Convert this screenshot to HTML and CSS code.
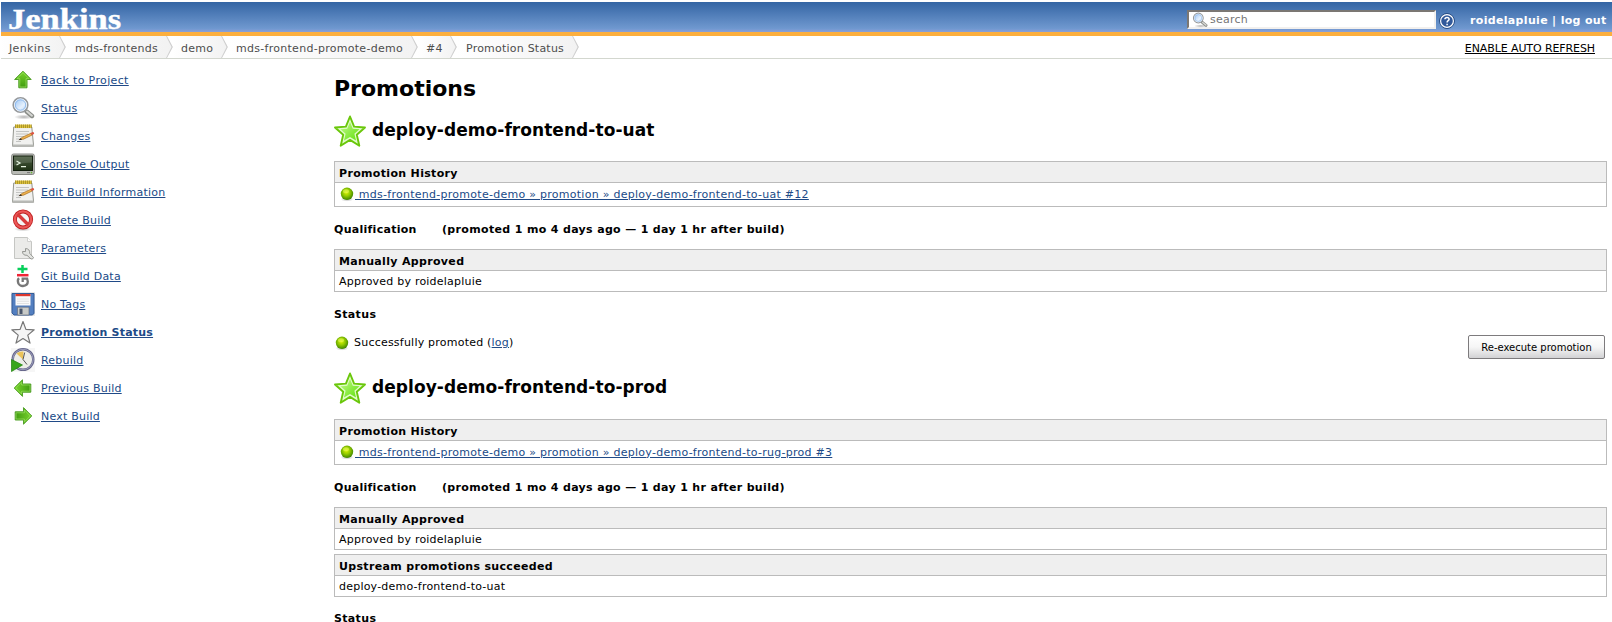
FILE: index.html
```html
<!DOCTYPE html>
<html lang="en">
<head>
<meta charset="utf-8">
<title>Promotion Status [Jenkins]</title>
<link rel="stylesheet" href="styles.css">
</head>
<body>
<svg width="0" height="0" class="defs" aria-hidden="true">
  <defs>
    <linearGradient id="green" x1="0" y1="0" x2="0" y2="1"><stop offset="0" stop-color="#7ad52e"/><stop offset="1" stop-color="#3f9a10"/></linearGradient>
    <radialGradient id="ball" cx=".45" cy=".4" r=".6"><stop offset="0" stop-color="#d8f000"/><stop offset=".45" stop-color="#98ce00"/><stop offset="1" stop-color="#3f8600"/></radialGradient>
    <radialGradient id="shade"><stop offset="0" stop-color="#000" stop-opacity=".3"/><stop offset="1" stop-color="#000" stop-opacity="0"/></radialGradient>
    <linearGradient id="lens" x1="0" y1="0" x2="1" y2="1"><stop offset="0" stop-color="#8fbcf0"/><stop offset=".6" stop-color="#e6f1fd"/><stop offset="1" stop-color="#a9ccf5"/></linearGradient>
    <linearGradient id="starfill" x1="0" y1="0" x2="1" y2="1"><stop offset="0" stop-color="#c4fb8c"/><stop offset="1" stop-color="#5fe00a"/></linearGradient>
    <linearGradient id="screen" x1="0" y1="0" x2="0" y2="1"><stop offset="0" stop-color="#4a5c40"/><stop offset="1" stop-color="#1f3216"/></linearGradient>
    <symbol id="search" viewBox="0 0 24 24">
      <ellipse cx="13" cy="21" rx="10" ry="2.5" fill="url(#shade)"/>
      <path d="M15.500 15.500l5.500 4.500" stroke="#8a8d88" stroke-width="4.400" stroke-linecap="round"/>
      <path d="M16 15.600l5 4.100" stroke="#d5d6d3" stroke-width="2" stroke-linecap="round"/>
      <circle cx="9.500" cy="9" r="7.300" fill="url(#lens)" stroke="#96999c" stroke-width="1.600"/>
      <circle cx="9.500" cy="9" r="6" fill="none" stroke="#f4f6f8" stroke-width=".9"/>
      <circle cx="9.500" cy="9" r="5.200" fill="none" stroke="#7fb0ea" stroke-width=".8"/>
    </symbol>
    <symbol id="notepad" viewBox="0 0 24 24">
      <path d="M1.500 22.200L2.700 3h18.100l1.800 19.200z" fill="#f1f1ef" stroke="#94968f"/>
      <path d="M1.600 20.500h21l.2 2H1.300z" fill="#b8b9b5"/>
      <path d="M4 2.300h16" stroke="#ddc13a" stroke-width="3.500"/>
      <path d="M4 2.300h17" stroke="#a08c2a" stroke-width="3.500" stroke-dasharray=".8 1.200"/>
      <path d="M5 7.500h13M5 10h12M5 12.500h8M5 15h5M5 17.500h5" stroke="#c3c4c2"/>
      <path d="M8.500 15.500l3-2.300 8.500-4 1.100 1.800-8.700 4.200z" fill="#f0b44e" stroke="#a56a1c" stroke-width=".7"/>
      <path d="M19.500 8.900l2.100-1q2 0 1.500 2l-2.400 1.200z" fill="#dd5442"/>
      <path d="M7.500 16.200l3.600-.6-1.400-1.300z" fill="#222"/>
    </symbol>
    <symbol id="arrow" viewBox="0 0 24 24">
      <path d="M12 3.200l8.200 8.300H16v8.300H7.800v-8.300H3.600z" fill="url(#green)" stroke="#53a12b" stroke-linejoin="round"/>
      <path d="M12 4.700l5.800 5.900H15v8.300H8.800v-8.300H6z" fill="none" stroke="#a9eb70" stroke-width=".8" stroke-opacity=".7"/>
    </symbol>
    <symbol id="orb" viewBox="0 0 16 16">
      <ellipse cx="8" cy="13.300" rx="6.500" ry="2.300" fill="url(#shade)"/>
      <circle cx="8" cy="7.800" r="6.200" fill="url(#ball)"/>
      <ellipse cx="7" cy="5.300" rx="3" ry="2" fill="#f2ff70" fill-opacity=".5"/>
    </symbol>
    <symbol id="bigstar" viewBox="0 0 32 32">
      <path d="M16 1.500l4.100 10.100 10.900.9-8.200 7.200 2.500 11L16 24.900l-9.300 5.800 2.500-11L1 12.500l10.900-.9z" fill="#e0fcc8" stroke="#6ac70b" stroke-width="1.900" stroke-linejoin="round"/>
      <path d="M16 7l2.800 6.700 6.700.5-5.100 4.500 1.600 6.900-6-3.600-6 3.600 1.600-6.900-5.100-4.500 6.700-.5z" fill="url(#starfill)"/>
    </symbol>
  </defs>
</svg>

<header class="header">
  <a class="logo">Jenkins</a>
  <div class="searchbox"><svg class="search-icon"><use href="#search"/></svg><span>search</span></div>
  <svg class="help" viewBox="0 0 16 16"><circle cx="8" cy="8" r="7.400" fill="#31599a" stroke="#24497f"/><circle cx="8" cy="8" r="6.400" fill="none" stroke="#fff" stroke-width="1.200"/><path d="M5.900 6.300C6 3.700 10.200 3.800 10.100 6.300 10.100 7.700 8.100 7.600 8.100 9.400M8.100 10.700v1.500" fill="none" stroke="#fff" stroke-width="1.500"/></svg>
  <div class="login"><a>roidelapluie</a> | <a>log out</a></div>
</header>

<nav class="crumbs">
  <a class="crumb c1">Jenkins</a><a class="crumb c2">mds-frontends</a><a class="crumb c3">demo</a><a class="crumb c4">mds-frontend-promote-demo</a><a class="crumb c5">#4</a><a class="crumb c6">Promotion Status</a>
  <a class="refresh">ENABLE AUTO REFRESH</a>
</nav>

<div class="page">
  <aside class="tasks">
    <a class="task"><svg><use href="#arrow"/></svg><span class="wide">Back to Project</span></a>
    <a class="task"><svg><use href="#search"/></svg><span>Status</span></a>
    <a class="task"><svg><use href="#notepad"/></svg><span>Changes</span></a>
    <a class="task"><svg viewBox="0 0 24 24"><rect x=".7" y="2" width="22.600" height="20.500" rx="1.800" fill="#b9bbb6" stroke="#858782"/><rect x="2.500" y="4" width="19" height="14.500" fill="url(#screen)" stroke="#14200f"/><path d="M3 4.500h18v6q-9 0-18 3z" fill="#fff" fill-opacity=".12"/><path d="M5.500 9l3.500 2-3.500 2M10 14.700h5" fill="none" stroke="#e5f3df" stroke-width="1.200"/><path d="M16 20.600h3" stroke="#777"/><circle cx="20.500" cy="20.600" r=".8" fill="#65b52f"/></svg><span>Console Output</span></a>
    <a class="task"><svg><use href="#notepad"/></svg><span>Edit Build Information</span></a>
    <a class="task"><svg viewBox="0 0 24 24"><ellipse cx="12" cy="21" rx="9" ry="2.500" fill="url(#shade)"/><circle cx="12" cy="11.500" r="8.100" fill="#f5f5f5" stroke="#bd1e1e" stroke-width="4"/><circle cx="12" cy="11.500" r="8.100" fill="none" stroke="#eb5757" stroke-width="2.400"/><path d="M6.500 6l11 11" stroke="#d93b3b" stroke-width="3.300"/></svg><span>Delete Build</span></a>
    <a class="task"><svg viewBox="0 0 24 24"><path d="M3.500 1.500h13l4 4v17h-17z" fill="#ebebe9" stroke="#c5c6c3"/><path d="M16.500 1.500v4h4" fill="#fff" stroke="#cfcfcd"/><path d="M14.500 12.500v3h-3q0 4 4.500 3.800l4 3.700q2 .5 2.500-1.500l-3.700-4q.2-4.800-4.300-5z" fill="#e2e3e0" stroke="#8d8f8a" stroke-width=".9"/></svg><span>Parameters</span></a>
    <a class="task"><svg viewBox="0 0 24 24"><path d="M11.500 1v8M6.500 5h10" stroke="#08cf5b" stroke-width="2.500"/><path d="M6 11.200h11.500" stroke="#ef2536" stroke-width="2.500"/><path d="M8 14.200Q6 16 7.400 19.500Q9 22.200 12 22q4.800-.2 4.800-4.400l-.7-3h-4.400v3.500" fill="none" stroke="#777" stroke-width="2.300"/></svg><span>Git Build Data</span></a>
    <a class="task"><svg viewBox="0 0 24 24"><rect width="24" height="24" fill="#e8e8e8"/><path d="M1 1.500h22v19.800l-1.500 1.700H3L1 21z" fill="#537fc0" stroke="#345c98"/><path d="M4.500 2h15v11.500h-15z" fill="#fafafa"/><path d="M4.500 2h15v2.200h-15z" fill="#de382d"/><path d="M6 7h12M6 9.300h12M6 11.500h12" stroke="#ddd" stroke-width=".8"/><path d="M6.500 15.200h11.500V23H6.500z" fill="#c8cac7" stroke="#67707e" stroke-width=".7"/><path d="M8.500 16.600h3V22h-3z" fill="#4a566b"/></svg><span>No Tags</span></a>
    <a class="task current"><svg viewBox="0 0 24 24"><path d="M12 1.500l2.900 7.900 8.300.4-6.400 5.300 2.200 8L12 18.600l-7 4.500 2.200-8L.8 9.800l8.300-.4z" fill="#f5f5f5" stroke="#777" stroke-width="1.200" stroke-linejoin="round"/></svg><span>Promotion Status</span></a>
    <a class="task"><svg viewBox="0 0 24 24"><rect width="24" height="24" fill="#f6f6f6"/><circle cx="12" cy="11.500" r="10.300" fill="#edeee9" stroke="#65668a" stroke-width="2.400"/><circle cx="12" cy="11.500" r="10.200" fill="none" stroke="#aaaac8" stroke-width=".8"/><path d="M12 11.500L5.500 5.600Q8.500 3 12.500 3.600z" fill="#ebc45a"/><path d="M12 11.500l1.700-7M12 11.500l4 5" stroke="#555" stroke-width="1"/><path d="M.5 11.500L11.500 17 .5 23.500z" fill="#36a51b" stroke="#208310" stroke-width=".7"/></svg><span>Rebuild</span></a>
    <a class="task"><svg class="left"><use href="#arrow"/></svg><span>Previous Build</span></a>
    <a class="task"><svg class="right"><use href="#arrow"/></svg><span>Next Build</span></a>
  </aside>

  <main class="main">
    <h1>Promotions</h1>

    <section class="promotion">
      <h2><svg><use href="#bigstar"/></svg><span>deploy-demo-frontend-to-uat</span></h2>
      <table class="pane history">
        <tr><th>Promotion History</th></tr>
        <tr><td><svg class="orb"><use href="#orb"/></svg><a class="link">&nbsp;mds-frontend-promote-demo » promotion » deploy-demo-frontend-to-uat #12</a></td></tr>
      </table>
      <h3><span class="qual">Qualification</span><span>(promoted 1 mo 4 days ago — 1 day 1 hr after build)</span></h3>
      <table class="pane">
        <tr><th>Manually Approved</th></tr>
        <tr><td>Approved by roidelapluie</td></tr>
      </table>
      <h3 class="status">Status</h3>
      <div class="result"><svg class="orb"><use href="#orb"/></svg><span>Successfully promoted (<a class="link">log</a>)</span><button>Re-execute promotion</button></div>
    </section>

    <section class="promotion">
      <h2 class="tall"><svg><use href="#bigstar"/></svg><span>deploy-demo-frontend-to-prod</span></h2>
      <table class="pane history">
        <tr><th>Promotion History</th></tr>
        <tr><td><svg class="orb"><use href="#orb"/></svg><a class="link">&nbsp;mds-frontend-promote-demo » promotion » deploy-demo-frontend-to-rug-prod #3</a></td></tr>
      </table>
      <h3><span class="qual">Qualification</span><span>(promoted 1 mo 4 days ago — 1 day 1 hr after build)</span></h3>
      <table class="pane">
        <tr><th>Manually Approved</th></tr>
        <tr><td>Approved by roidelapluie</td></tr>
      </table>
      <table class="pane upstream">
        <tr><th>Upstream promotions succeeded</th></tr>
        <tr><td>deploy-demo-frontend-to-uat</td></tr>
      </table>
      <h3 class="status last">Status</h3>
    </section>
  </main>
</div>
</body>
</html>
```
FILE: styles.css
```css
* { box-sizing: border-box; }
html { overflow: hidden; }
body {
  margin: 0;
  padding: 2px 0 0 1px;
  height: 622px;
  overflow: hidden;
  background: #fff;
  color: #000;
  font: 11px/13px "DejaVu Sans", Verdana, sans-serif;
  letter-spacing: .22px;
}
svg { display: block; flex: none; }
.defs { position: absolute; }
.link { color: #204a87; text-decoration: underline; }

.header {
  display: flex;
  align-items: center;
  height: 34px;
  padding-right: 5px;
  border-bottom: 4px solid #fcaf3e;
  background: linear-gradient(#3465a4, #6f98cf 88%, #8aa0d8);
  color: #fff;
}
.logo {
  margin: 3px auto 0 7px;
  font: bold 30px/30px "Liberation Serif", serif;
  letter-spacing: 0;
  -webkit-text-stroke: .4px #fff;
  transform: scaleX(1.15);
  transform-origin: 0 0;
}
.searchbox {
  display: flex;
  align-items: center;
  width: 249px;
  height: 19px;
  margin-top: 5px;
  padding-left: 3px;
  border: 2px solid;
  border-color: #7b7773 #f2f0ee #f2f0ee #7b7773;
  background: #fff;
  color: #757575;
}
.search-icon { width: 16px; height: 16px; margin-right: 2px; }
.help { width: 16px; height: 16px; margin: 7px 0 0 3px; }
.login { width: 137px; margin: 6px 0 0 15px; font-weight: bold; letter-spacing: .33px; white-space: pre; }

.crumbs {
  display: flex;
  height: 23px;
  border-bottom: 1px solid #d3d7cf;
  color: #4d4d4d;
}
.crumb {
  position: relative;
  height: 22px;
  padding-left: 8px;
  line-height: 25px;
  white-space: nowrap;
  background: linear-gradient(90deg, #fff, #f2f2f2);
  clip-path: polygon(0 0, calc(100% - 6px) 0, 100% 50%, calc(100% - 6px) 100%, 0 100%);
}
.crumb::after {
  content: "";
  position: absolute;
  right: 0;
  top: 0;
  width: 7px;
  height: 22px;
  background: #d0d0d0;
  clip-path: polygon(0 0, 1.500px 0, 100% 50%, 1.500px 100%, 0 100%, calc(100% - 1.500px) 50%);
}
.c1 { width: 65px; letter-spacing: .38px; }
.c2 { width: 107px; padding-left: 9px; letter-spacing: .22px; }
.c3 { width: 55px; }
.c4 { width: 190px; letter-spacing: .28px; }
.c5 { width: 39px; }
.c6 { width: 122px; padding-left: 9px; }
.refresh { margin: 6px 17px 0 auto; color: #000; letter-spacing: -.1px; text-decoration: underline; }

.page { display: flex; }
.tasks { width: 333px; padding: 7px 0 0 10px; }
.task { display: flex; align-items: center; height: 28px; gap: 6px; color: #204a87; text-decoration: underline; }
.task svg { width: 24px; height: 24px; }
.task .left { transform: rotate(-90deg); }
.task .right { transform: rotate(90deg); }
.wide { letter-spacing: .36px; }
.current { font-weight: bold; }

.main { width: 1273px; }
h1 { margin: 17px 0 0; font-size: 22px; line-height: 26px; letter-spacing: 0; }
h2 { display: flex; align-items: flex-start; height: 46px; margin: 13px 0 0; gap: 6px; font-size: 17px; line-height: 30px; letter-spacing: .06px; }
h2.tall { height: 47px; }
h2 svg { width: 32px; height: 32px; }
.pane { width: 100%; border: 1px solid #bbb; border-collapse: collapse; }
.pane th, .pane td { height: 21px; padding: 2px 4px 0; text-align: left; border: 1px solid #bbb; }
.pane th { background: #efefef; letter-spacing: .33px; }
.pane td { padding-top: 1px; }
.history td { display: flex; height: 23px; padding-top: 0; padding-bottom: 1px; align-items: center; border: 0; letter-spacing: .27px; }
.orb { width: 16px; height: 16px; }
h3 { display: flex; margin: 16px 0 13px; font-size: 11px; line-height: 13px; letter-spacing: .34px; }
.qual { width: 108px; letter-spacing: .28px; }
h3.last { margin: 15px 0 0; }
.result { display: flex; align-items: flex-start; height: 24px; margin-top: 14px; }
.result span { margin-top: 1px; }
.result .orb { margin-right: 4px; }
.result button {
  width: 137px;
  height: 24px;
  margin: 0 2px 0 auto;
  padding: 0;
  border: 1px solid #7d7b7d;
  border-radius: 2px;
  background: linear-gradient(#fff, #f6f6f6 50%, #d2d2d4);
  font: 10px "DejaVu Sans", sans-serif;
}
.upstream { margin-top: 4px; }
```
